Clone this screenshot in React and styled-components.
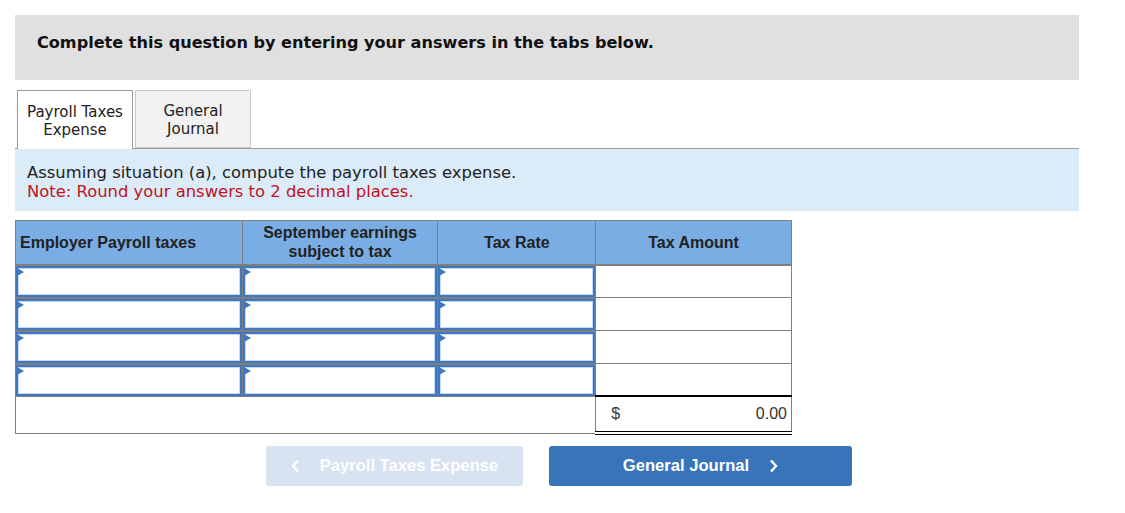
import styled, { createGlobalStyle } from "styled-components";

const Global = createGlobalStyle`
  body {
    margin: 0;
    background: #ffffff;
    font-family: "DejaVu Sans", Verdana, sans-serif;
  }
`;

const Page = styled.div`
  padding: 15px;
  width: 1064px;
`;

const Banner = styled.div`
  background: #e0e0e0;
  height: 65px;
  box-sizing: border-box;
  padding: 18px 22px 0;
  font-weight: 700;
  font-size: 16.1px;
  color: #111;
`;

const Tabs = styled.div`
  display: flex;
  gap: 2px;
  margin-top: 10px;
  padding-left: 2px;
  border-bottom: 1px solid #9a9a9a;
  height: 58px;
`;

const Tab = styled.div`
  width: 116px;
  height: ${({ $active }) => ($active ? "59px" : "58px")};
  box-sizing: border-box;
  border: 1px solid ${({ $active }) => ($active ? "#9a9a9a" : "#c8c8c8")};
  border-bottom: ${({ $active }) => ($active ? "none" : "1px solid #c8c8c8")};
  background: ${({ $active }) => ($active ? "#ffffff" : "#f2f2f2")};
  display: flex;
  align-items: center;
  justify-content: center;
  text-align: center;
  font-size: 15px;
  line-height: 18px;
  color: #222;
  padding-top: 2px;
  position: relative;
  z-index: 1;
`;

const Panel = styled.div`
  background: #dcebf8;
  height: 62px;
  box-sizing: border-box;
  padding: 14px 12px 0;
  font-size: 16.4px;
  line-height: 19px;
  color: #222;
`;

const Note = styled.div`
  color: #c0131c;
`;

const Table = styled.table`
  margin-top: 9px;
  border-collapse: collapse;
  width: 777px;
  font-family: "Liberation Sans", Arial, sans-serif;
`;

const Th = styled.th`
  background: #7aade4;
  border: 1px solid #7f7f7f;
  border-bottom: 2px solid #7f7f7f;
  height: 44px;
  padding: 0 4px;
  font-size: 16px;
  line-height: 19px;
  font-weight: 700;
  color: #222;
  text-align: ${({ $left }) => ($left ? "left" : "center")};
  width: ${({ $w }) => $w}px;
  box-sizing: border-box;
`;

const Td = styled.td`
  border: 1px solid #7f7f7f;
  border-top-width: ${({ $thick }) => ($thick ? "2px" : "1px")};
  padding: 0;
  height: ${({ $h }) => $h || 32}px;
  box-sizing: border-box;
  vertical-align: middle;
`;

const InputBox = styled.div`
  position: relative;
  height: 31px;
  box-sizing: border-box;
  border: 2px solid #3f78bf;
  box-shadow: inset 0 0 0 1px #c5daf2;
  background: #fff;
`;

const Marker = styled.span`
  position: absolute;
  left: -1px;
  top: 0;
  width: 0;
  height: 0;
  border-top: 4.5px solid transparent;
  border-bottom: 4.5px solid transparent;
  border-left: 7px solid #3f78bf;
`;

const TotalCell = styled.td`
  border-left: 1px solid #7f7f7f;
  border-right: 1px solid #7f7f7f;
  border-top: 2px solid #000;
  border-bottom: 4px double #000;
  height: 37px;
  padding: 0 4px 0 15px;
  font-size: 16px;
  color: #333;
  box-sizing: border-box;
`;

const TotalInner = styled.div`
  display: flex;
  justify-content: space-between;
`;

const Buttons = styled.div`
  display: flex;
  gap: 26px;
  margin-top: 11px;
  padding-left: 251px;
`;

const NavButton = styled.button`
  height: 40px;
  width: ${({ $w }) => $w}px;
  border: none;
  border-radius: 3px;
  background: ${({ $disabled }) => ($disabled ? "#d7e3f0" : "#3874b9")};
  color: #fff;
  font-family: "Liberation Sans", Arial, sans-serif;
  font-weight: 700;
  font-size: 16.6px;
  display: flex;
  align-items: center;
  justify-content: center;
  gap: ${({ $gap }) => $gap}px;
  cursor: pointer;
`;

function Chevron({ left }) {
  return (
    <svg width="9" height="14" viewBox="0 0 9 14">
      <polyline
        points={left ? "7,1.5 2,7 7,12.5" : "2,1.5 7,7 2,12.5"}
        fill="none"
        stroke="#fff"
        strokeWidth="2.4"
      />
    </svg>
  );
}

function InputCell({ thick }) {
  return (
    <Td $thick={thick}>
      <InputBox>
        <Marker />
      </InputBox>
    </Td>
  );
}

const rows = [0, 1, 2, 3];

export default function App() {
  return (
    <>
      <Global />
      <Page>
        <Banner>Complete this question by entering your answers in the tabs below.</Banner>
        <Tabs>
          <Tab $active>
            Payroll Taxes
            <br />
            Expense
          </Tab>
          <Tab>
            General
            <br />
            Journal
          </Tab>
        </Tabs>
        <Panel>
          Assuming situation (a), compute the payroll taxes expense.
          <Note>Note: Round your answers to 2 decimal places.</Note>
        </Panel>
        <Table>
          <thead>
            <tr>
              <Th $left $w={227}>Employer Payroll taxes</Th>
              <Th $w={196}>
                September earnings
                <br />
                subject to tax
              </Th>
              <Th $w={158}>Tax Rate</Th>
              <Th $w={196}>Tax Amount</Th>
            </tr>
          </thead>
          <tbody>
            {rows.map((r) => (
              <tr key={r}>
                <InputCell thick={r > 0} />
                <InputCell thick={r > 0} />
                <InputCell thick={r > 0} />
                <Td />
              </tr>
            ))}
            <tr>
              <Td colSpan={3} $h={37} />
              <TotalCell>
                <TotalInner>
                  <span>$</span>
                  <span>0.00</span>
                </TotalInner>
              </TotalCell>
            </tr>
          </tbody>
        </Table>
        <Buttons>
          <NavButton $disabled $w={257} $gap={20}>
            <Chevron left />
            Payroll Taxes Expense
          </NavButton>
          <NavButton $w={303} $gap={20}>
            General Journal
            <Chevron />
          </NavButton>
        </Buttons>
      </Page>
    </>
  );
}
